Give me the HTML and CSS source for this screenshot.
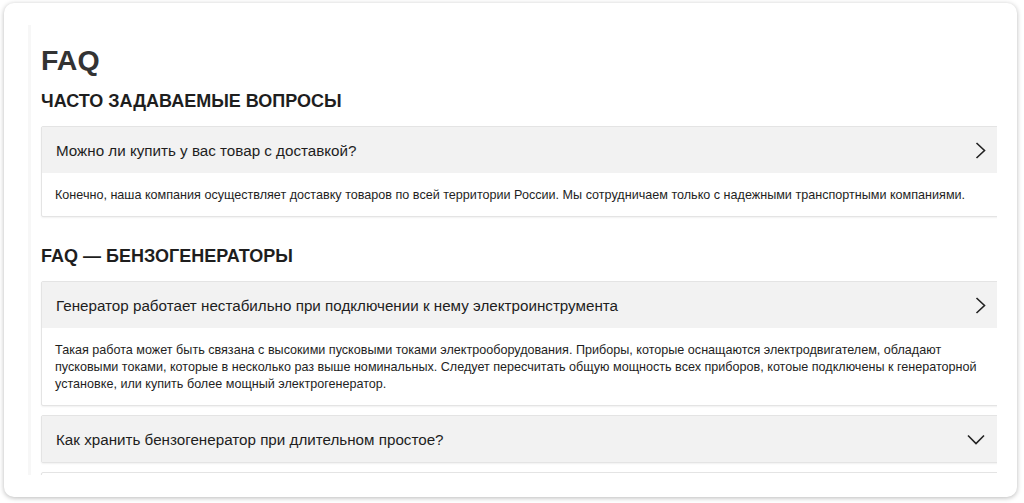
FILE: index.html
```html
<!DOCTYPE html>
<html lang="ru">
<head>
    <meta charset="UTF-8">
    <meta name="viewport" content="width=device-width, initial-scale=1.0">
    <title>FAQ</title>
    <link rel="stylesheet" href="styles.css">
</head>
<body>
    <div class="card">
        <div class="inner">
            <h1 class="title">FAQ</h1>
            <h2 class="section">Часто задаваемые вопросы</h2>
            <div class="item">
                <div class="question">
                    <span>Можно ли купить у вас товар с доставкой?</span>
                    <svg class="arrow" width="11" height="17" viewBox="0 0 11 17"><polyline points="1.5,1 9.5,8.5 1.5,16" fill="none" stroke="#222" stroke-width="1.6"/></svg>
                </div>
                <div class="answer">Конечно, наша компания осуществляет доставку товаров по всей территории России. Мы сотрудничаем только с надежными транспортными компаниями.</div>
            </div>

            <h2 class="section second">FAQ — бензогенераторы</h2>
            <div class="item">
                <div class="question">
                    <span>Генератор работает нестабильно при подключении к нему электроинструмента</span>
                    <svg class="arrow" width="11" height="17" viewBox="0 0 11 17"><polyline points="1.5,1 9.5,8.5 1.5,16" fill="none" stroke="#222" stroke-width="1.6"/></svg>
                </div>
                <div class="answer">Такая работа может быть связана с высокими пусковыми токами электрооборудования. Приборы, которые оснащаются электродвигателем, обладают пусковыми токами, которые в несколько раз выше номинальных. Следует пересчитать общую мощность всех приборов, котоые подключены к генераторной установке, или купить более мощный электрогенератор.</div>
            </div>
            <div class="item">
                <div class="question">
                    <span>Как хранить бензогенератор при длительном простое?</span>
                    <svg class="arrow down" width="18" height="11" viewBox="0 0 18 11"><polyline points="1,1.5 9,9.5 17,1.5" fill="none" stroke="#222" stroke-width="1.6"/></svg>
                </div>
            </div>
            <div class="item next"></div>
        </div>
    </div>
</body>
</html>
```

FILE: styles.css
```css
*{
    box-sizing: border-box;
}
body{
    margin: 0;
    padding: 3px 7px 6px 4px;
    background-color: #fff;
    font-family: "Liberation Sans", Arial, sans-serif;
    color: #222;
}
.card{
    height: 494px;
    background-color: #fff;
    border-radius: 10px;
    box-shadow: 0 1px 5px rgba(0,0,0,0.28);
    padding: 22px 20px 0 24px;
}
.inner{
    height: 450px;
    overflow: hidden;
    padding: 18px 0 0 10px;
    border-left: 3px solid #f7f7f7;
}
.title{
    margin: 0;
    font-size: 28.5px;
    line-height: 34px;
    font-weight: bold;
    color: #333;
}
.section{
    margin: 13px 0 14px;
    font-size: 18px;
    line-height: 22px;
    font-weight: bold;
    text-transform: uppercase;
    color: #1e1e1e;
}
.section.second{
    margin-top: 28px;
}
.item{
    width: calc(100% + 8px);
    border: 1px solid #e4e4e4;
    border-radius: 2px;
    box-shadow: 0 1px 2px rgba(0,0,0,0.06);
    margin-bottom: 9px;
    background-color: #fff;
}
.item.next{
    height: 40px;
}
.question{
    display: flex;
    align-items: center;
    justify-content: space-between;
    background-color: #f2f2f2;
    padding: 13.5px 18px 13.5px 14px;
    font-size: 15.2px;
    line-height: 19px;
    color: #1e1e1e;
}
.arrow.down{
    margin-right: 1px;
}
.answer{
    padding: 14px 14px 12px 13px;
    font-size: 12.6px;
    line-height: 17px;
    color: #1e1e1e;
}
```
